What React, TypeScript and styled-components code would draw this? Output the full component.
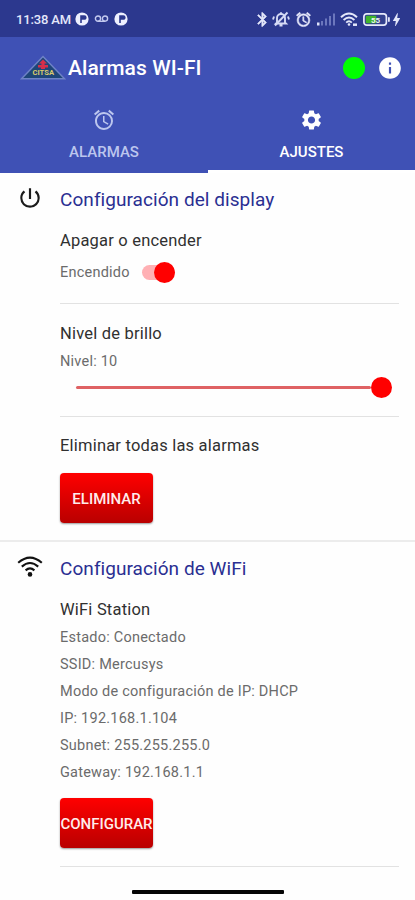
import React from 'react';
import styled, { createGlobalStyle } from 'styled-components';
import { MdAlarm, MdBluetooth, MdBolt, MdInfo, MdPowerSettingsNew, MdSettings } from 'react-icons/md';

const GlobalStyle = createGlobalStyle`
  * { box-sizing: border-box; }
  body { margin: 0; background: #fefefe; font-family: Roboto, "Liberation Sans", sans-serif; }
`;

const Screen = styled.div`
  width: 415px;
  height: 900px;
  display: flex;
  flex-direction: column;
  overflow: hidden;
  background: #fefefe;
`;

const StatusBar = styled.header`
  height: 37px;
  flex: none;
  display: flex;
  align-items: center;
  justify-content: space-between;
  padding: 1px 10px 0 16px;
  background: #2c388e;
  color: #e4e7fa;
`;

const StatusGroup = styled.div`
  display: flex;
  align-items: center;
  gap: 5px;
  svg { display: block; flex: none; }
`;

const Clock = styled.span`
  font-size: 13px;
  font-weight: 500;
  letter-spacing: -0.15px;
  white-space: nowrap;
  width: 54px;
`;

const BluetoothIcon = styled(MdBluetooth)`
  margin-right: -4px;
  path:not([fill="none"]) { stroke: currentColor; stroke-width: 0.8px; }
`;

const StatusAlarmIcon = styled(MdAlarm)`
  path:not([fill="none"]) { stroke: currentColor; stroke-width: 0.8px; }
`;

const ChargingIcon = styled(MdBolt)`
  margin-left: -7px;
`;

const AppBar = styled.div`
  height: 61px;
  flex: none;
  display: flex;
  align-items: center;
  padding: 0 12px 0 20px;
  background: #3f51b5;
  color: #fff;
  svg { display: block; flex: none; }
`;

const AppTitle = styled.h1`
  margin: 1px auto 0 2px;
  font-size: 21px;
  line-height: 28px;
  font-weight: 500;
  letter-spacing: 0.06px;
  white-space: nowrap;
`;

const OnlineDot = styled.span`
  width: 22px;
  height: 22px;
  margin-right: 12px;
  border-radius: 50%;
  background: #00ff00;
`;

const TabBar = styled.nav`
  height: 75px;
  flex: none;
  display: grid;
  grid-template-columns: 208px 207px;
  background: #3f51b5;
`;

const Tab = styled.div<{ $active?: boolean }>`
  display: flex;
  flex-direction: column;
  align-items: center;
  padding-top: 10px;
  color: ${p => (p.$active ? '#fff' : '#bcc6ee')};
  border-bottom: 3px solid ${p => (p.$active ? '#fff' : 'transparent')};
  svg { display: block; height: 24px; }
`;

const TabLabel = styled.span`
  margin-top: 10px;
  font-size: 15px;
  line-height: 20px;
  font-weight: 500;
`;

const Section = styled.section<{ $height: number }>`
  height: ${p => p.$height}px;
  flex: none;
  display: grid;
  grid-template-columns: 60px 339px;
  & + & { border-top: 2px solid #ececec; }
`;

const IconSlot = styled.div<{ $top: number }>`
  display: flex;
  justify-content: center;
  padding-top: ${p => p.$top}px;
  color: #1b1b1b;
  svg { display: block; }
`;

const Content = styled.div`
  display: flex;
  flex-direction: column;
  align-items: stretch;
`;

const Heading = styled.h2`
  height: 54px;
  margin: 0;
  font-size: 19px;
  line-height: 54px;
  font-weight: 400;
  letter-spacing: 0.06px;
  white-space: nowrap;
  color: #2a2f92;
`;

const Subtitle = styled.h3<{ $height?: number }>`
  height: ${p => p.$height ?? 30}px;
  margin: 0;
  font-size: 16.5px;
  line-height: ${p => p.$height ?? 30}px;
  font-weight: 400;
  letter-spacing: 0.2px;
  white-space: nowrap;
  color: #303030;
`;

const Detail = styled.p`
  height: 27px;
  margin: 0;
  font-size: 14.5px;
  line-height: 27px;
  letter-spacing: 0.23px;
  white-space: nowrap;
  color: #6b6b6b;
`;

const SwitchRow = styled.div`
  height: 35px;
  display: flex;
  align-items: center;
`;

const Track = styled.span`
  width: 33px;
  height: 15px;
  margin-left: 12px;
  display: flex;
  align-items: center;
  justify-content: flex-end;
  border-radius: 8px;
  background: #ffb0b4;
`;

const Thumb = styled.span`
  width: 21px;
  height: 21px;
  flex: none;
  border-radius: 50%;
  background: #ff0000;
`;

const Divider = styled.hr<{ $top: number; $bottom: number }>`
  width: 100%;
  height: 1px;
  flex: none;
  margin: ${p => p.$top}px 0 ${p => p.$bottom}px;
  border: 0;
  background: #e2e2e2;
`;

const Slider = styled.div`
  display: flex;
  align-items: center;
  height: 21px;
  margin: 2px 7px 0 16px;
`;

const Rail = styled.span`
  flex: 1;
  height: 3px;
  border-radius: 2px;
  background: #df6264;
`;

const Action = styled.button<{ $top: number }>`
  width: 93px;
  height: 50px;
  flex: none;
  display: flex;
  align-items: center;
  justify-content: center;
  margin: ${p => p.$top}px 0 0;
  padding: 2px 0 0;
  overflow: hidden;
  border: 0;
  border-radius: 4px;
  background: linear-gradient(#ff0000, #b90000);
  box-shadow: 0 1px 2px rgba(0, 0, 0, 0.4);
  color: #ffecec;
  font: 500 15px Roboto, "Liberation Sans", sans-serif;
  white-space: nowrap;
`;

const HomeArea = styled.footer`
  flex: 1;
  display: flex;
  justify-content: center;
  align-items: flex-end;
  padding: 0 0 6px;
`;

const HomeBar = styled.span`
  width: 152px;
  height: 4px;
  border-radius: 1px;
  background: #050505;
`;

const BadgeIcon = () => (
  <svg width="14" height="14" viewBox="0 0 14 14">
    <circle cx="7" cy="7" r="6.6" fill="#eef0ff" />
    <path d="M6 11V4h3.300a1.500 1.500 0 0 1 0 3H6" fill="#2c388e" stroke="#2c388e" strokeWidth="1.600" />
  </svg>
);

const VoicemailIcon = () => (
  <svg width="15" height="8" viewBox="0 0 15 8" fill="none" stroke="#c3c9ef" strokeWidth="1.4">
    <circle cx="4" cy="3.6" r="2.6" />
    <circle cx="11" cy="3.6" r="2.6" />
    <path d="M4 6.3h7" />
  </svg>
);

const MutedBellIcon = () => (
  <svg width="18" height="16" viewBox="0 0 18 16" fill="none" stroke="#d5daf5" strokeWidth="1.900">
    <path d="M5 11.500V7a4 4 0 0 1 8 0v4.500l1 1H4zM7.500 14.500h3M9 3V1.200M2 5.500l-1 3M16 5.500l1 3" />
    <path d="M3 14.500L15.500 1.500" />
  </svg>
);

const SignalIcon = () => (
  <svg width="18" height="13" viewBox="0 0 18 13" fill="#6c77bd">
    <rect x="0" y="9.500" width="2.500" height="3" fill="#dfe3fa" />
    <rect x="4" y="8" width="2" height="4.500" />
    <rect x="8" y="5.500" width="2" height="7" />
    <rect x="12" y="3" width="2" height="9.500" />
    <rect x="16" y="0.500" width="2" height="12" />
  </svg>
);

const StatusWifiIcon = () => (
  <svg width="18" height="15" viewBox="0 0 18 15" fill="none" stroke="#e4e7fa" strokeWidth="1.900">
    <path d="M1 5.200Q9-2.400 17 5.200M3.600 8Q9 3 14.400 8M6.200 10.600Q9 8 11.800 10.600" />
    <circle cx="9" cy="12.500" r="1.300" fill="#e4e7fa" stroke="none" />
    <path d="M13 12.700h4" strokeWidth="2.500" />
  </svg>
);

const BatteryIcon = () => (
  <svg width="27" height="13" viewBox="0 0 27 13">
    <rect x="0.900" y="0.900" width="22.500" height="11.200" rx="2.800" fill="#33418f" stroke="#e6e9fb" strokeWidth="1.700" />
    <rect x="2.800" y="2.800" width="10.500" height="7.400" rx="1" fill="#3fb52c" />
    <rect x="25" y="4" width="1.800" height="5" rx="0.900" fill="#e6e9fb" />
    <text x="12.500" y="9.500" textAnchor="middle" fontSize="8" fontWeight="700" fill="#eef6f0">55</text>
  </svg>
);

const Logo = () => (
  <svg width="46" height="25" viewBox="0 0 46 25">
    <path d="M23 1.500L44.500 23.800H1.500z" fill="#1e4678" stroke="#6f83c6" strokeWidth="1.400" />
    <path d="M23 4.500l4 4h-2.400v1.500H28v2.500h-3V14h-4v-1.500h-3V10h3.400V8.500H19z" fill="#d52f4a" />
    <text x="23.300" y="20" textAnchor="middle" fontSize="7.600" fontWeight="700" fill="#d9cc6c">CITSA</text>
  </svg>
);

const WifiIcon = () => (
  <svg width="26" height="22" viewBox="0 0 26 22" fill="none" stroke="#111" strokeWidth="2.100">
    <path d="M1.200 6.800Q13-3.600 24.800 6.800M4.800 10.600Q13 3.400 21.200 10.600M8.600 14.400Q13 10.400 17.400 14.400" />
    <circle cx="13" cy="18.400" r="2.300" fill="#111" stroke="none" />
  </svg>
);

const network = [
  'Estado: Conectado',
  'SSID: Mercusys',
  'Modo de configuración de IP: DHCP',
  'IP: 192.168.1.104',
  'Subnet: 255.255.255.0',
  'Gateway: 192.168.1.1',
];

export default function App() {
  return (
    <Screen>
      <GlobalStyle />
      <StatusBar>
        <StatusGroup>
          <Clock>11:38 AM</Clock>
          <BadgeIcon />
          <VoicemailIcon />
          <BadgeIcon />
        </StatusGroup>
        <StatusGroup>
          <BluetoothIcon size={17} />
          <MutedBellIcon />
          <StatusAlarmIcon size={17} />
          <SignalIcon />
          <StatusWifiIcon />
          <BatteryIcon />
          <ChargingIcon size={17} />
        </StatusGroup>
      </StatusBar>
      <AppBar>
        <Logo />
        <AppTitle>Alarmas WI-FI</AppTitle>
        <OnlineDot />
        <MdInfo size={26} />
      </AppBar>
      <TabBar>
        <Tab>
          <MdAlarm size={24} />
          <TabLabel>ALARMAS</TabLabel>
        </Tab>
        <Tab $active>
          <MdSettings size={25} />
          <TabLabel>AJUSTES</TabLabel>
        </Tab>
      </TabBar>
      <Section $height={367}>
        <IconSlot $top={12}><MdPowerSettingsNew size={26} /></IconSlot>
        <Content>
          <Heading>Configuración del display</Heading>
          <Subtitle $height={28}>Apagar o encender</Subtitle>
          <SwitchRow>
            <Detail>Encendido</Detail>
            <Track><Thumb /></Track>
          </SwitchRow>
          <Divider $top={13} $bottom={15} />
          <Subtitle $height={29}>Nivel de brillo</Subtitle>
          <Detail>Nivel: 10</Detail>
          <Slider><Rail /><Thumb /></Slider>
          <Divider $top={18} $bottom={14} />
          <Subtitle>Eliminar todas las alarmas</Subtitle>
          <Action $top={12}>ELIMINAR</Action>
        </Content>
      </Section>
      <Section $height={328}>
        <IconSlot $top={14}><WifiIcon /></IconSlot>
        <Content>
          <Heading>Configuración de WiFi</Heading>
          <Subtitle $height={28}>WiFi Station</Subtitle>
          {network.map(line => <Detail key={line}>{line}</Detail>)}
          <Action $top={12}>CONFIGURAR</Action>
          <Divider $top={18} $bottom={0} />
        </Content>
      </Section>
      <HomeArea><HomeBar /></HomeArea>
    </Screen>
  );
}
